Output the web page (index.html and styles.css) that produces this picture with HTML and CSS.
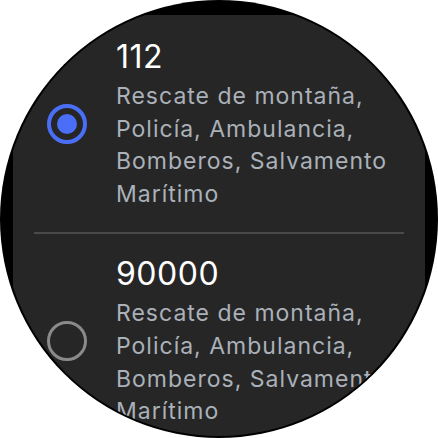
FILE: index.html
```html
<!DOCTYPE html>
<html>
<head>
<meta charset="utf-8">
<link rel="stylesheet" href="styles.css">
</head>
<body>
<div class="watch">
  <div class="screen">
    <div class="list">
      <div class="item">
        <div class="radio-col"><span class="radio selected"><span class="dot"></span></span></div>
        <div class="text">
          <div class="title">112</div>
          <div class="desc">Rescate de montaña,<br>Policía, Ambulancia,<br>Bomberos, Salvamento<br>Marítimo</div>
        </div>
      </div>
      <div class="divider"></div>
      <div class="item">
        <div class="radio-col"><span class="radio"></span></div>
        <div class="text">
          <div class="title">90000</div>
          <div class="desc">Rescate de montaña,<br>Policía, Ambulancia,<br>Bomberos, Salvamento<br>Marítimo</div>
        </div>
      </div>
    </div>
  </div>
</div>
</body>
</html>
```
FILE: styles.css
```css
html, body {
  margin: 0;
  padding: 0;
  background: #ffffff;
}
.watch {
  width: 438px;
  height: 438px;
  border-radius: 50%;
  background: #000000;
  box-sizing: border-box;
  padding: 15px 13px 0 13px;
  overflow: hidden;
}
.screen {
  width: 412px;
  height: 423px;
  background: #262626;
  clip-path: circle(217px at 206px 204px);
  overflow: hidden;
  font-family: "Inter", "Open Sans", sans-serif;
}
.list {
  padding-top: 22px;
}
.item {
  display: flex;
  align-items: center;
}
.radio-col {
  width: 103px;
  padding-left: 34px;
  box-sizing: border-box;
  flex: none;
}
.radio {
  width: 40px;
  height: 40px;
  box-sizing: border-box;
  border-radius: 50%;
  border: 3px solid #8a8a8a;
  display: flex;
  align-items: center;
  justify-content: center;
}
.radio.selected {
  border: 4px solid #4b6ef6;
}
.dot {
  width: 20px;
  height: 20px;
  border-radius: 50%;
  background: #4b6ef6;
}
.text {
  white-space: nowrap;
}
.title {
  color: #ffffff;
  font-size: 32px;
  line-height: 40px;
  letter-spacing: 0.5px;
}
.desc {
  color: #aab1b9;
  font-size: 23px;
  line-height: 32.6px;
  letter-spacing: 1px;
  margin-top: 3px;
}
.divider {
  height: 2px;
  background: #4a4a4a;
  margin: 22px 21px 20px 21px;
}
```
